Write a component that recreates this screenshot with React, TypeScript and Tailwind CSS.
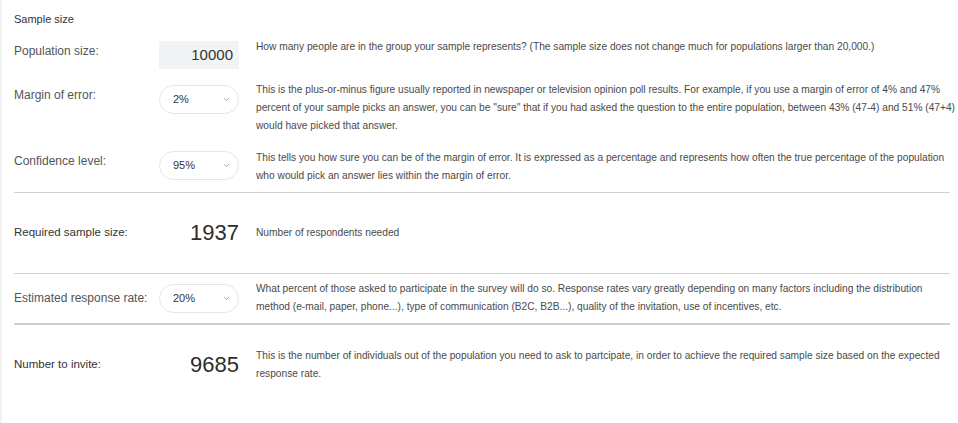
import { ChevronDown } from "lucide-react"

const font = { fontFamily: '"Liberation Sans", Arial, sans-serif' }

function Select({ value }: { value: string }) {
  return (
    <div className="flex h-[29px] w-[80px] shrink-0 items-center justify-between rounded-full border border-[#e6e6e6] bg-white pl-[13px] pr-[7px] text-[11px] text-[#333]">
      <span>{value}</span>
      <ChevronDown className="h-[9px] w-[9px] text-[#888]" strokeWidth={2} />
    </div>
  )
}

function Desc({ lines }: { lines: string[] }) {
  return (
    <div className="ml-[17px] min-w-0 flex-1 text-[10.2px] leading-[18px] text-[#4a4a4a]">
      {lines.map((l) => (
        <p key={l} className="whitespace-nowrap">
          {l}
        </p>
      ))}
    </div>
  )
}

const label = "w-[145px] shrink-0 text-[12px] leading-[20px] text-[#555]"
const strong = "w-[145px] shrink-0 text-[11.5px] font-medium text-[#333]"
const big = "w-[80px] shrink-0 text-right text-[22px] font-medium leading-[24px] text-[#2d2d2d]"

export default function App() {
  return (
    <div className="min-h-screen overflow-hidden border-l-2 border-[#f2f2f2] bg-white" style={font}>
      <div className="w-[948px] pl-[12px] pt-[12px]">
        <h2 className="text-[11px] font-medium leading-[14px] text-[#333]">Sample size</h2>

        {/* Population size */}
        <div className="mt-[12px] flex items-start">
          <div className={`mt-[3px] ${label}`}>Population size:</div>
          <div className="mt-[3px] flex h-[28px] w-[80px] shrink-0 items-center justify-end rounded-[2px] bg-[#f2f3f5] pr-[6px] text-[15px] text-[#333]">
            10000
          </div>
          <Desc lines={["How many people are in the group your sample represents? (The sample size does not change much for populations larger than 20,000.)"]} />
        </div>

        {/* Margin of error */}
        <div className="mt-[12px] flex items-start">
          <div className={`mt-[4px] ${label}`}>Margin of error:</div>
          <div className="mt-[4px]">
            <Select value="2%" />
          </div>
          <Desc
            lines={[
              "This is the plus-or-minus figure usually reported in newspaper or television opinion poll results. For example, if you use a margin of error of 4% and 47%",
              'percent of your sample picks an answer, you can be "sure" that if you had asked the question to the entire population, between 43% (47-4) and 51% (47+4)',
              "would have picked that answer.",
            ]}
          />
        </div>

        {/* Confidence level */}
        <div className="mt-[14px] flex items-start">
          <div className={`mt-[2px] ${label}`}>Confidence level:</div>
          <div className="mt-[2px]">
            <Select value="95%" />
          </div>
          <Desc
            lines={[
              "This tells you how sure you can be of the margin of error. It is expressed as a percentage and represents how often the true percentage of the population",
              "who would pick an answer lies within the margin of error.",
            ]}
          />
        </div>

        <div className="mt-[7px] border-t border-[#d2d2d2]" />

        {/* Required sample size */}
        <div className="flex h-[80px] items-center">
          <div className={strong}>Required sample size:</div>
          <div className={big}>1937</div>
          <Desc lines={["Number of respondents needed"]} />
        </div>

        <div className="border-t border-[#d2d2d2]" />

        {/* Estimated response rate */}
        <div className="mt-[6px] flex items-center">
          <div className={label}>Estimated response rate:</div>
          <Select value="20%" />
          <Desc
            lines={[
              "What percent of those asked to participate in the survey will do so. Response rates vary greatly depending on many factors including the distribution",
              "method (e-mail, paper, phone...), type of communication (B2C, B2B...), quality of the invitation, use of incentives, etc.",
            ]}
          />
        </div>

        <div className="mt-[7px] border-t-2 border-[#cfcfcf]" />

        {/* Number to invite */}
        <div className="mt-[22px] flex items-center">
          <div className={strong}>Number to invite:</div>
          <div className={big}>9685</div>
          <Desc
            lines={[
              "This is the number of individuals out of the population you need to ask to partcipate, in order to achieve the required sample size based on the expected",
              "response rate.",
            ]}
          />
        </div>
      </div>
    </div>
  )
}
